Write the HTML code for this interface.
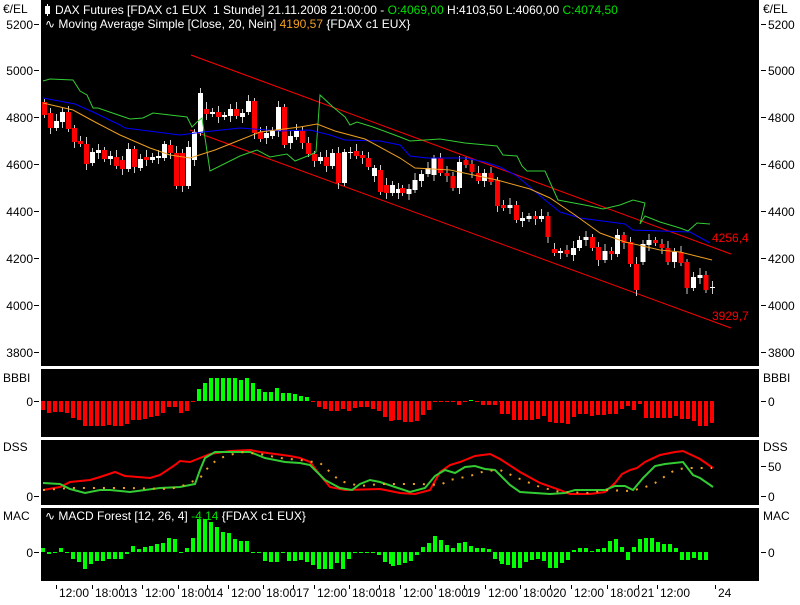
<!DOCTYPE html>
<html><head><meta charset="utf-8"><style>
body{margin:0;background:#fff;width:800px;height:600px;overflow:hidden;font-family:"Liberation Sans",sans-serif}
svg text{font-family:"Liberation Sans",sans-serif;font-size:12px}
</style></head><body>
<svg id="s" width="800" height="600" xmlns="http://www.w3.org/2000/svg" shape-rendering="crispEdges">
<rect x="0" y="0" width="800" height="600" fill="#fff"/>
<rect x="41" y="0" width="718" height="366" fill="#000"/>
<rect x="41" y="369" width="718" height="68" fill="#000"/>
<rect x="41" y="440" width="718" height="65" fill="#000"/>
<rect x="41" y="508" width="718" height="73" fill="#000"/>
<g id="g"></g>
<g fill="#000">
<text x="3" y="13">€/EL</text><text x="763" y="13">€/EL</text>
<text x="3" y="382">BBBI</text><text x="763" y="382">BBBI</text>
<text x="3" y="451">DSS</text><text x="763" y="451">DSS</text>
<text x="3" y="520">MAC</text><text x="763" y="520">MAC</text>
</g>
<g fill="#fff">
<rect x="45" y="6" width="5" height="8"/><rect x="47" y="4" width="1" height="12"/>
<text x="55" y="14">DAX Futures [FDAX c1 EUX&#160; 1 Stunde] 21.11.2008 21:00:00 - <tspan fill="#00e000">O:4069,00</tspan> H:4103,50 L:4060,00 <tspan fill="#00e000">C:4074,50</tspan></text>
<text x="45" y="28">∿ Moving Average Simple [Close, 20, Nein] <tspan fill="#f0a020">4190,57</tspan> {FDAX c1 EUX}</text>
<text x="45" y="520">∿ MACD Forest [12, 26, 4] <tspan fill="#00e000">-4,14</tspan> {FDAX c1 EUX}</text>
</g>
<g fill="#f00"><text x="712" y="242">4256,4</text><text x="712" y="320">3929,7</text></g>
</svg>
<script>
var g=document.getElementById('g'),h='';
function R(x,y,w,hh,c){if(hh<0){y+=hh;hh=-hh}if(hh<1)hh=1;h+='<rect x="'+x+'" y="'+y+'" width="'+w+'" height="'+hh+'" fill="'+c+'"/>'}
function T(t,x,y,a){h+='<text x="'+x+'" y="'+y+'" text-anchor="'+(a||'start')+'" fill="#000">'+t+'</text>'}
function PL(p,c,w,d){h+='<polyline fill="none" stroke="'+c+'" stroke-width="'+(w||1)+'" '+(d?'stroke-dasharray="'+d+'" ':'')+'shape-rendering="auto" points="'+p+'"/>'}
[[5200,24],[5000,70],[4800,117],[4600,164],[4400,211],[4200,258],[4000,305],[3800,352]].forEach(function(v){
T(v[0],33,v[1]+5,'end');R(34,v[1],5,1,'#000');R(761,v[1],5,1,'#000');T(v[0],768,v[1]+5)});
T('0',33,406,'end');R(34,401,5,1,'#000');R(761,401,5,1,'#000');T('0',768,406);
T('0',33,501,'end');R(34,496,5,1,'#000');R(761,496,5,1,'#000');T('0',768,501);
R(761,466,5,1,'#000');T('50',768,471);
T('0',33,557,'end');R(34,552,5,1,'#000');R(761,552,5,1,'#000');T('0',768,557);
[["12:00",59],["18:00",95],["13",124],["12:00",145],["18:00",181],["14",210],["12:00",231],["18:00",266],["17",296],["12:00",317],["18:00",352],["18",382],["12:00",403],["18:00",438],["19",467],["12:00",488],["18:00",523],["20",553],["12:00",574],["18:00",610],["21",641],["12:00",660],["24",718]].forEach(function(v){
R(v[1]-3,585,1,4,'#000');T(v[0],v[1],597)});
PL('191,55 731,254','#f00');PL('190,130 731,328','#f00');
var c1=[[102,115],[113,128],[128,121],[122,112],[112,129],[128,142],[141,144],[144,164],[163,152],[153,150],[150,159],[159,156],[157,166],[160,169],[169,149],[149,167],[168,159],[157,160],[160,157],[158,156],[158,144],[145,153],[153,186],[153,186],[186,147],[160,132],[133,93],[109,114],[114,112],[112,117],[117,115],[116,109],[109,116],[117,113],[112,101],[101,133],[132,139],[138,133],[136,131],[131,107],[107,145],[143,136],[137,131],[131,143],[143,154],[154,161],[161,157],[157,166],[166,153],[153,183],[183,152],[153,152],[151,156],[155,158],[158,167],[176,168],[170,192],[185,193],[193,185],[193,189]];
var c2=[[188,193],[194,189],[190,180],[181,174],[174,168],[175,158],[158,173],[173,176],[176,188],[188,162],[160,165],[164,172],[173,181],[181,173],[173,182],[180,206],[205,208],[208,205],[205,220],[221,218],[219,216],[216,219],[219,216],[216,237],[249,253],[253,251],[250,254],[255,248],[248,240],[240,237],[237,248],[247,260],[260,251],[251,254],[254,235],[235,243],[242,264],[264,290],[262,244],[245,240],[240,243],[244,248],[248,262],[262,252],[252,263],[262,288],[288,277],[278,275],[275,290],[288,287]];
function cand(x,o,c,k){var t=Math.min(o,c),b=Math.max(o,c),col=c<o?'#fff':'#f00';
var wt=3+(k*7%5),wb=3+(k*3%6);R(x,t-wt,1,b-t+wt+wb,'#ccc');R(x-2,t,5,b-t,col)}
c1.forEach(function(v,i){cand(44+6*i,v[0],v[1],i)});
c2.forEach(function(v,i){cand(402+i*(310/(c2.length-1)),v[0],v[1],i)});
PL('43,81 50,79 73,80 80,91 87,95 93,108 98,108 130,119 143,118 153,113 187,117 192,127 197,122 202,118 210,171 240,156 257,150 270,157 287,154 295,161 310,155 316,152 320,95 333,107 345,117 350,125 357,122 373,127 400,137 410,141 440,139 465,143 497,146 503,155 517,156 522,166 527,171 545,171 558,200 590,206 603,209 620,205 633,200 645,203 640,224 645,216 660,222 680,228 688,231 697,223 710,224','#3c3');
PL('43,98 75,104 93,112 120,125 125,128 180,135 203,132 240,128 280,131 310,130 330,135 345,140 380,141 400,145 410,156 427,158 465,158 485,162 500,167 517,176 545,200 560,212 580,218 625,224 633,230 690,232 710,243','#00f');
PL('43,103 73,110 95,122 120,135 150,148 170,155 190,158 215,150 240,140 260,132 300,127 317,124 335,131 365,139 400,158 415,168 450,170 497,180 530,189 550,198 575,215 600,233 625,242 660,250 680,252 712,260','#f0a020');
function bars(z,segs,pos,neg){var m={};segs.forEach(function(s){s[1].forEach(function(v,i){var x=Math.round(s[0]+6*i);if(x<s[2]&&x>=s[3])m[x]=v})});
for(var x in m){var v=m[x];if(v>=0)R(+x-2,z-v,4,v||1,pos);else R(+x-2,z,4,-v,neg)}}
bars(401,[[43,[-9,-12,-11,-11,-12,-17,-19,-25,-25,-25,-25,-24,-25,-25,-23,-19,-19,-18,-16,-15,-12,-6,-6,-12,-10,-1,12,18,23,23,23,23,23,21,23,18,12,9,9,13,8,8,7,5,4,-1,-6,-8,-10,-10,-8,-10,-7,-6,-6,-8,-10,-16,-20],392,0],
[381,[-9,-15,-19,-19,-21,-21,-20,-14,-9,-1,-1,-1,-1,-4,-1,1,-1,-4,-4,-4,-1,-9,-11,-15,-18],502,392],
[502,[-13,-13,-19,-19,-19,-19,-18,-15,-21,-22,-22,-23,-16,-13,-13,-15,-14,-14,-13,-13,-8,-5,-9,-3,-17,-17,-17,-17,-17,-15,-18,-18,-20,-25,-25,-22],720,502]],'#0f0','#f00');
bars(552,[[43,[4,-2,-1,4,-1,-7,-10,-17,-12,-9,-9,-7,-7,-7,-2,6,3,5,6,8,9,14,13,-1,4,14,33,33,30,25,20,19,13,11,11,0,-1,-9,-10,-10,-1,-9,-9,-8,-10,-13,-17,-17,-17,-11,-17,-7,-1,-1,-1,-1,-3,-10,-12],392,0],
[381,[-3,-9,-14,-13,-11,-9,-3,5,9,16,12,7,4,9,10,6,4,4,3,-7,-9,-13,-14,-17],502,392],
[502,[-12,-13,-16,-16,-10,-8,-7,-9,-16,-16,-11,-8,2,4,4,1,3,4,11,13,5,-8,5,13,14,14,10,8,8,4,-8,-8,-6,-8,-8],720,502]],'#0f0','#0f0');
PL('43,490 60,487 70,482 90,480 100,477 115,472 125,476 150,478 160,475 175,465 180,461 190,462 200,458 210,454 230,451 250,450 260,452 290,456 300,458 310,462 320,475 330,487 345,490 380,489 400,493 415,494 430,490 440,472 450,465 460,462 475,456 490,454 500,459 520,472 540,483 560,490 570,494 590,494 605,492 615,483 622,474 630,470 637,468 645,462 660,455 675,452 683,451 700,459 713,468','#f00',2);
PL('43,483 60,484 70,489 85,493 100,490 110,490 130,492 160,488 180,487 195,484 200,470 205,458 215,452 250,452 265,458 285,462 300,463 310,465 315,470 325,480 340,488 352,490 360,484 370,480 380,482 395,487 410,492 425,488 435,476 445,470 455,473 465,467 475,466 485,469 495,470 502,477 510,485 520,492 550,494 565,493 575,490 605,490 615,486 625,486 633,490 643,478 655,466 665,464 683,462 693,475 700,478 713,487','#3c3',2);
PL('43,490 70,488 100,488 130,488 170,489 185,485 200,478 210,465 220,458 240,452 260,454 280,458 300,460 320,463 330,472 340,481 360,486 380,484 420,484 440,485 450,480 470,476 485,471 500,470 520,479 540,487 560,492 590,493 605,490 630,491 643,488 655,483 667,475 675,470 685,468 712,468','#f0a020',2,'2,8');
g.innerHTML=h;
</script>
</body></html>
